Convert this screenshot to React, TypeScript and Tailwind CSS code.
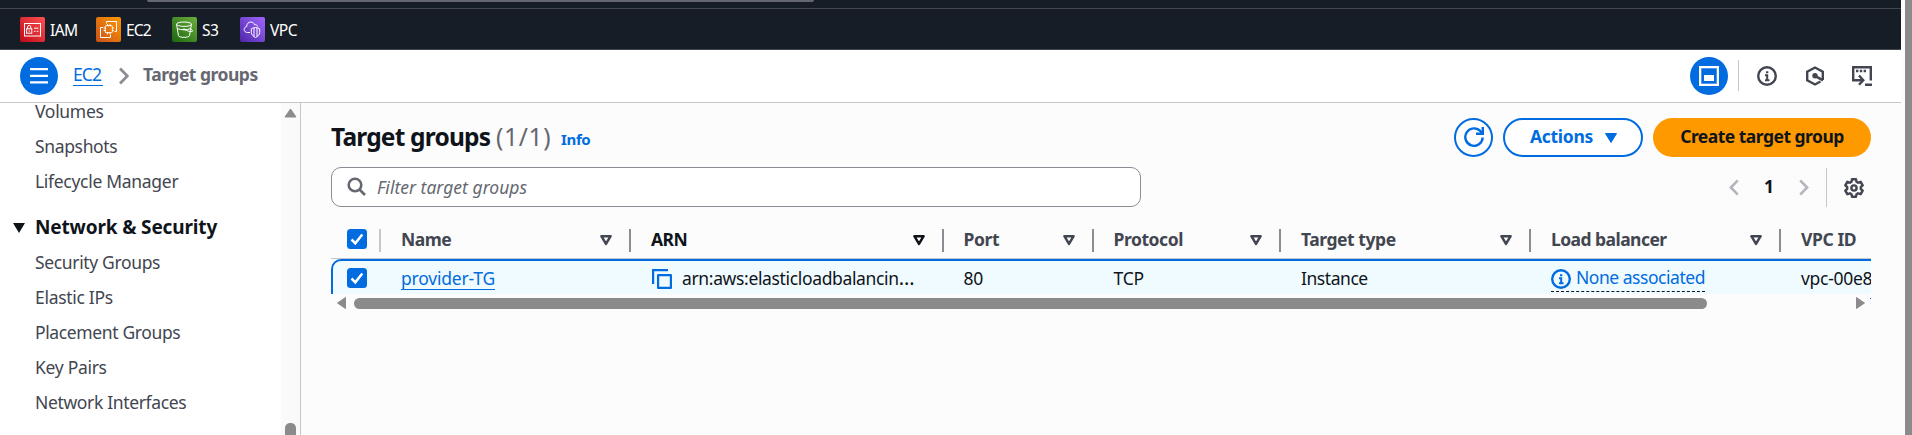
import React from "react";

const INK = "#424650";
const BLUE = "#006ce0";

const shortcuts = [
  { name: "IAM", from: "#bd0816", to: "#ff5252", cls: "w-[51px] tracking-[-0.6px]" },
  { name: "EC2", from: "#c8511b", to: "#ff9900", cls: "w-[51px] tracking-[-0.9px]" },
  { name: "S3", from: "#1b660f", to: "#6cae3e", cls: "w-[43px] tracking-[-0.5px]" },
  { name: "VPC", from: "#4d27a8", to: "#a166ff", cls: "w-[60px] tracking-[-0.5px]" },
];

function ServiceGlyph({ name }: { name: string }) {
  switch (name) {
    case "IAM":
      return (
        <>
          <rect x="4.5" y="6.5" width="16" height="12.5" />
          <rect x="6.6" y="11.8" width="5.2" height="4.4" />
          <path d="M7.6 11.8V10a1.6 1.6 0 0 1 3.2 0v1.8M9.2 13.4v1.4M14 11.2h4.4M14 14.3h1.6M16.8 14.3h1.6" />
        </>
      );
    case "EC2":
      return (
        <>
          <rect x="9.3" y="8.7" width="7" height="7" rx=".8" />
          <path d="M11.5 8.7V7M14 8.7V7M11.5 17.4v-1.7M14 17.4v-1.7M16.3 11h1.6M16.3 13.5h1.6M7.6 11h1.6M7.6 13.5h1.6" />
          <path d="M10.5 6.5v-2h10v10h-2M7 10.5H4.500v10h10v-2.800" />
        </>
      );
    case "S3":
      return (
        <>
          <ellipse cx="12" cy="7.200" rx="7.500" ry="2.200" />
          <path d="M4.500 7.200l2 11.500c.5 2.200 10.400 2.200 11 0l2-11.500M12 12.300c3 1.600 6.500 2.700 8.200 2.200 1.300-.6-.6-2-2.200-3M5.300 11.500c3 1.700 10 1.700 13.300 0" />
          <circle cx="12" cy="12.300" r=".6" />
        </>
      );
    default:
      return (
        <>
          <path d="M10 15.500H7.500c-2 0-3.300-1.300-3.300-3 0-1.600 1-2.700 2.500-3-.1-2.600 1.700-4.500 4.100-4.500 2 0 3.200 1.100 3.800 2.800 1.500-.6 2.700.3 2.800 1.700" />
          <path d="M15.500 10.500c1.500 0 3 .6 4.200 1.300v3.700c0 2.200-1.800 3.800-4.200 5-2.400-1.200-4.200-2.800-4.200-5v-3.700c1.200-.7 2.700-1.300 4.200-1.300zM14 11v8.500M17 11v8.500" />
        </>
      );
  }
}

function ServiceIcon({ name, from, to }: { name: string; from: string; to: string }) {
  const id = "grad-" + name;
  return (
    <svg className="h-[25px] w-[25px] shrink-0" viewBox="0 0 25 25" fill="none" stroke="#fff" strokeWidth="1">
      <defs>
        <linearGradient id={id} x1="0" y1="1" x2="1" y2="0">
          <stop offset="0" stopColor={from} />
          <stop offset="1" stopColor={to} />
        </linearGradient>
      </defs>
      <rect width="25" height="25" rx="2" fill={`url(#${id})`} stroke="none" />
      <ServiceGlyph name={name} />
    </svg>
  );
}

function TopBar() {
  return (
    <header className="flex h-[50px] shrink-0 flex-col border-b border-[#424650] bg-[#161d26]">
      <div className="h-[9px] shrink-0 border-b border-[#424650]">
        <div className="ml-[147px] h-[2px] w-[667px] rounded-b-[3px] bg-[#656871]" />
      </div>
      <nav className="flex h-[41px] pt-2 pl-5">
        {shortcuts.map((s) => (
          <a key={s.name} className="flex h-[25px] items-center">
            <ServiceIcon name={s.name} from={s.from} to={s.to} />
            <span className={`${s.cls} pt-px pl-[5px] text-[15.600px] leading-[25px] text-white`}>{s.name}</span>
          </a>
        ))}
      </nav>
    </header>
  );
}

function Chevron({ left, color, className }: { left?: boolean; color: string; className: string }) {
  return (
    <svg className={className} viewBox="0 0 10 18" fill="none" stroke={color} strokeWidth="2.700">
      <path d={left ? "M9 1.500L1.700 9 9 16.500" : "M1 1.500L8.300 9 1 16.500"} />
    </svg>
  );
}

function InfoIcon({ color }: { color: string }) {
  return (
    <svg className="h-5 w-5 shrink-0" viewBox="0 0 20 20" fill="none" stroke={color} strokeWidth="2.400">
      <circle cx="10" cy="10" r="8.800" />
      <path d="M8 9.300h2.200V15M8 14.200h4.500M9 6.200h2.300" strokeWidth="2" />
    </svg>
  );
}

function Breadcrumbs() {
  return (
    <div className="flex h-[53px] shrink-0 items-start border-b border-[#c6c6cd] bg-white pt-[7px] pl-5">
      <button className="flex h-[38px] w-[38px] items-center justify-center rounded-full bg-[#006ce0]">
        <svg className="h-[18px] w-[18px]" viewBox="0 0 18 18" stroke="#fff" strokeWidth="2.300">
          <path d="M0 2.200h18M0 8.800h18M0 15.400h18" />
        </svg>
      </button>
      <a className="ml-[15px] mt-1 h-[25px] w-[30px] border-b border-[#006ce0] text-[17.5px] leading-[27px] tracking-[-0.9px] text-[#006ce0]">EC2</a>
      <Chevron color="#8c8c94" className="mt-[10px] ml-4 h-[18px] w-[10px]" />
      <span className="ml-[14px] mt-1 text-[17.5px] leading-[27px] font-bold tracking-[-0.5px] text-[#656871]">Target groups</span>
      <div className="ml-auto flex pr-[29px]">
        <button className="flex h-[38px] w-[38px] items-center justify-center rounded-full bg-[#006ce0]">
          <svg className="h-5 w-5" viewBox="0 0 20 20" fill="none" stroke="#fff" strokeWidth="2.300">
            <rect x="1.150" y="1.150" width="17.700" height="17.700" />
            <rect x="5" y="9" width="10" height="6" fill="#fff" stroke="none" />
          </svg>
        </button>
        <span className="mt-[3px] ml-[10px] h-[31px] w-px bg-[#c6c6cd]" />
        <span className="mt-[9px] ml-[18px] h-5"><InfoIcon color={INK} /></span>
        <svg className="mt-[9px] ml-7 h-5 w-5" viewBox="0 0 20 20" fill="none" stroke={INK} strokeWidth="2.400">
          <path d="M17.800 14V5.700L10 1.500 2.200 5.700v8.600L10 18.500l5.500-3" />
          <path d="M10 9.800l8 4.500" strokeWidth="2.600" />
          <circle cx="10" cy="9.800" r="2.700" fill={INK} stroke="none" />
        </svg>
        <svg className="mt-[9px] ml-[27px] h-5 w-5" viewBox="0 0 20 20" fill="none" stroke={INK} strokeWidth="2.400">
          <path d="M5 14.200H1.200V1.200h17.600v13.300" />
          <path d="M4 5h2.400M7.800 5h2.400M11.600 5H14M4.500 14.200h6.500M7 9.500l4.300 4.700L7 18.800M13 18.800h7" />
        </svg>
      </div>
    </div>
  );
}

const storageLinks = [
  { t: "Volumes", c: "tracking-[-0.3px]" },
  { t: "Snapshots", c: "tracking-[-0.35px]" },
  { t: "Lifecycle Manager", c: "tracking-[-0.3px]" },
];
const networkLinks = [
  { t: "Security Groups", c: "tracking-[-0.35px]" },
  { t: "Elastic IPs", c: "tracking-[-0.3px]" },
  { t: "Placement Groups", c: "tracking-[-0.37px]" },
  { t: "Key Pairs", c: "tracking-[-0.3px]" },
  { t: "Network Interfaces", c: "tracking-[-0.35px]" },
];

function Sidebar() {
  return (
    <aside className="flex w-[301px] shrink-0 overflow-hidden border-r border-[#c6c6cd] bg-white">
      <div className="w-[281px] shrink-0 pl-[35px] text-[17.5px] whitespace-nowrap text-[#424650]">
        <ul className="-mt-[9px]">
          {storageLinks.map((l) => (
            <li key={l.t} className={`h-[35px] leading-[35px] ${l.c}`}>{l.t}</li>
          ))}
        </ul>
        <div className="-ml-[22px] flex h-[46px] items-center pt-[11px]">
          <svg className="mr-[10px] h-[10px] w-3 shrink-0" viewBox="0 0 12 10"><path d="M0 0h12L6 10z" fill="#0f141a" /></svg>
          <h3 className="text-[19px] leading-[35px] font-bold tracking-[-0.15px] text-[#0f141a]">Network &amp; Security</h3>
        </div>
        <ul>
          {networkLinks.map((l) => (
            <li key={l.t} className={`h-[35px] leading-[35px] ${l.c}`}>{l.t}</li>
          ))}
        </ul>
      </div>
      <div className="flex w-[19px] flex-col items-center justify-between bg-[#fafafa]">
        <svg className="mt-[5px] h-[10px] w-[13px]" viewBox="0 0 13 10"><path d="M6.500 1L12 9H1z" fill="#8b8b8b" stroke="#8b8b8b" strokeLinejoin="round" /></svg>
        <div className="h-3 w-[11px] rounded-t-[5px] bg-[#8b8b8b]" />
      </div>
    </aside>
  );
}

function Checkbox() {
  return (
    <svg className="h-5 w-5 shrink-0" viewBox="0 0 20 20" fill="none">
      <rect width="20" height="20" rx="3.500" fill={BLUE} />
      <path d="M4.500 10.500l3.800 3.800 7-8.800" stroke="#fff" strokeWidth="2.500" />
    </svg>
  );
}

const columns = [
  { t: "Name", w: "w-[250px]", c: "tracking-[-0.5px] text-[#424650]" },
  { t: "ARN", w: "w-[312.5px]", c: "tracking-[-0.5px] text-[#0f141a]", active: true },
  { t: "Port", w: "w-[150px]", c: "tracking-[-0.4px] text-[#424650]" },
  { t: "Protocol", w: "w-[187.5px]", c: "tracking-[-0.45px] text-[#424650]" },
  { t: "Target type", w: "w-[250px]", c: "tracking-[-0.45px] text-[#424650]" },
  { t: "Load balancer", w: "w-[250px]", c: "tracking-[-0.55px] text-[#424650]" },
];

function Table() {
  return (
    <div className="mt-4 w-[1540px] overflow-hidden">
      <div className="flex h-[36px] w-[1700px] border-b border-[#c6c6cd] pt-[6px] font-bold">
        <div className="flex w-[50px] justify-between pl-4">
          <Checkbox />
          <span className="h-[23px] w-[2px] bg-[#c6c6cd]" />
        </div>
        {columns.map((c) => (
          <div key={c.t} className={`flex shrink-0 justify-between pl-5 ${c.w}`}>
            <span className={`-mt-1 leading-[29px] ${c.c}`}>{c.t}</span>
            <div className="flex">
              <svg className="mt-[6px] mr-[17px] h-[11px] w-3" viewBox="0 0 12 11" fill="none">
                <path d="M1.400 1.200h9.200L6 8.900z" stroke={c.active ? "#0f141a" : INK} strokeWidth="2.500" strokeLinejoin="round" />
              </svg>
              <span className="h-[23px] w-[2px] bg-[#8c8c94]" />
            </div>
          </div>
        ))}
        <span className="-mt-1 pl-5 leading-[29px] tracking-[-0.4px] text-[#424650]">VPC ID</span>
      </div>
      <div className="h-[35px] overflow-hidden">
        <div className="flex h-[50px] w-[1700px] rounded-l-[10px] border-2 border-[#006ce0] bg-[#f0fbff] pt-[3px] leading-[28px] whitespace-nowrap text-[#0f141a]">
          <div className="w-[48px] shrink-0 pt-[4px] pl-[14px]"><Checkbox /></div>
          <div className="w-[250px] shrink-0 pl-5">
            <a className="inline-block h-[26px] border-b border-[#006ce0] tracking-[-0.2px] text-[#006ce0]">provider-TG</a>
          </div>
          <div className="flex w-[312.5px] shrink-0 pl-[21px]">
            <svg className="mt-[5px] mr-[11px] h-5 w-5" viewBox="0 0 20 20" fill="none" stroke={BLUE} strokeWidth="2.200">
              <path d="M1.100 15V1.100H16" />
              <rect x="6.100" y="6.100" width="12.800" height="12.800" strokeLinejoin="round" />
            </svg>
            <span className="-ml-px tracking-[-0.35px]">arn:aws:elasticloadbalancin<span className="text-[20px] leading-none">…</span></span>
          </div>
          <div className="w-[150px] shrink-0 pl-5 tracking-[-0.3px]">80</div>
          <div className="w-[187.5px] shrink-0 pl-5 tracking-[-0.2px]">TCP</div>
          <div className="w-[250px] shrink-0 pl-5 tracking-[-0.45px]">Instance</div>
          <div className="w-[250px] shrink-0 pl-5">
            <span className="inline-flex h-[28px] border-b border-dashed border-[#0f141a] text-[#006ce0]">
              <span className="mt-[5px] mr-[5px] h-5"><InfoIcon color={BLUE} /></span>
              <span className="-mt-px tracking-[-0.47px]">None associated</span>
            </span>
          </div>
          <div className="pl-5 tracking-[-0.3px]">vpc-00e8a1</div>
        </div>
      </div>
      <div className="flex h-4 items-end pb-px pl-[6px]">
        <svg className="h-3 w-[9px]" viewBox="0 0 9 12"><path d="M8.500.500v11L.5 6z" fill="#8b8b8b" stroke="#8b8b8b" strokeLinejoin="round" /></svg>
        <div className="ml-[8px] h-[11px] w-[1353px] rounded-full bg-[#8b8b8b]" />
        <svg className="ml-auto h-3 w-[9px]" viewBox="0 0 9 12"><path d="M.5.500v11L8.500 6z" fill="#8b8b8b" stroke="#8b8b8b" strokeLinejoin="round" /></svg>
        <span className="mb-[10px] ml-[5px] h-px w-px bg-[#006ce0]" />
      </div>
    </div>
  );
}

function TargetGroups() {
  return (
    <main className="flex w-[1600px] shrink-0 flex-col bg-[#fcfcfd] pt-[15px] pl-[30px] text-[17.5px] whitespace-nowrap">
      <div className="flex h-[39px] w-[1540px] items-start">
        <h1 className="w-[165px] text-[24.500px] leading-[37px] font-bold tracking-[-0.8px] text-[#0f141a]">Target groups</h1>
        <span className="w-[65px] text-[24.500px] leading-[37px] tracking-[0.700px] text-[#656871]">(1/1)</span>
        <a className="pt-[7px] text-[15px] leading-[28px] font-bold tracking-[-0.35px] text-[#006ce0]">Info</a>
        <div className="ml-auto flex gap-[10px] font-bold">
          <button className="flex h-[39px] w-[39px] items-center justify-center rounded-full border-2 border-[#006ce0] bg-white pb-px">
            <svg className="h-5 w-5" viewBox="0 0 20 20" fill="none" stroke={BLUE} strokeWidth="2.400">
              <path d="M18.700 10.500A8.700 8.700 0 1 1 16.500 4.300l2 2.200" />
              <path d="M18.800 0v6.800H12" />
            </svg>
          </button>
          <button className="flex h-[39px] w-[140px] items-center rounded-full border-2 border-[#006ce0] bg-white pl-[25px] text-[#006ce0]">
            <span className="w-[75px] pb-[2px] text-left tracking-[-0.3px]">Actions</span>
            <svg className="h-[10px] w-3" viewBox="0 0 12 10"><path d="M.5.500h11L6 9.500z" fill={BLUE} stroke={BLUE} strokeLinejoin="round" /></svg>
          </button>
          <button className="h-[39px] w-[218px] rounded-full bg-[#ff9900] pb-[2px] tracking-[-0.52px] text-[#0f141a]">Create target group</button>
        </div>
      </div>
      <div className="mt-[10px] flex h-10 w-[1540px] items-center">
        <div className="flex h-10 w-[810px] items-center rounded-[10px] border border-[#8c8c94] bg-white pl-[15px]">
          <svg className="h-5 w-5" viewBox="0 0 20 20" fill="none" stroke="#656871" strokeWidth="2.600">
            <circle cx="8" cy="8" r="6.300" />
            <path d="M12.500 12.500l5.500 5.500" />
          </svg>
          <span className="ml-[10px] tracking-[0.020px] text-[#656871] italic">Filter target groups</span>
        </div>
        <Chevron left color="#b4b4bb" className="mt-px ml-[588px] h-[17px] w-[10px]" />
        <span className="w-[60px] pb-[2px] text-center font-bold text-[#0f141a]">1</span>
        <Chevron color="#b4b4bb" className="mt-px h-[17px] w-[10px]" />
        <span className="mt-px ml-[17px] h-[39px] w-px bg-[#c6c6cd]" />
        <svg className="mt-[2px] ml-[17px] h-5 w-5" viewBox="0 0 20 20" fill="none" stroke={INK} strokeWidth="2.400" strokeLinejoin="round">
          <path d="M8 1.300h4l.5 2.500 1.500.9 2.700-.9 2 3.500-1.900 1.700v2l1.900 1.700-2 3.500-2.700-.9-1.500.9-.5 2.500H8l-.5-2.500-1.500-.9-2.700.9-2-3.500 1.900-1.700V9L1.300 7.300l2-3.500 2.700.9 1.500-.9z" />
          <circle cx="10" cy="10" r="2.600" />
        </svg>
      </div>
      <Table />
    </main>
  );
}

export default function App() {
  return (
    <div className="flex h-[435px] w-[1912px] overflow-hidden bg-[#fcfcfd] font-['Noto_Sans',sans-serif]">
      <div className="flex w-[1901px] shrink-0 flex-col">
        <TopBar />
        <Breadcrumbs />
        <div className="flex min-h-0 flex-1">
          <Sidebar />
          <TargetGroups />
        </div>
      </div>
      <div className="ml-1 w-[7px] bg-[#8b8b8b]" />
    </div>
  );
}
